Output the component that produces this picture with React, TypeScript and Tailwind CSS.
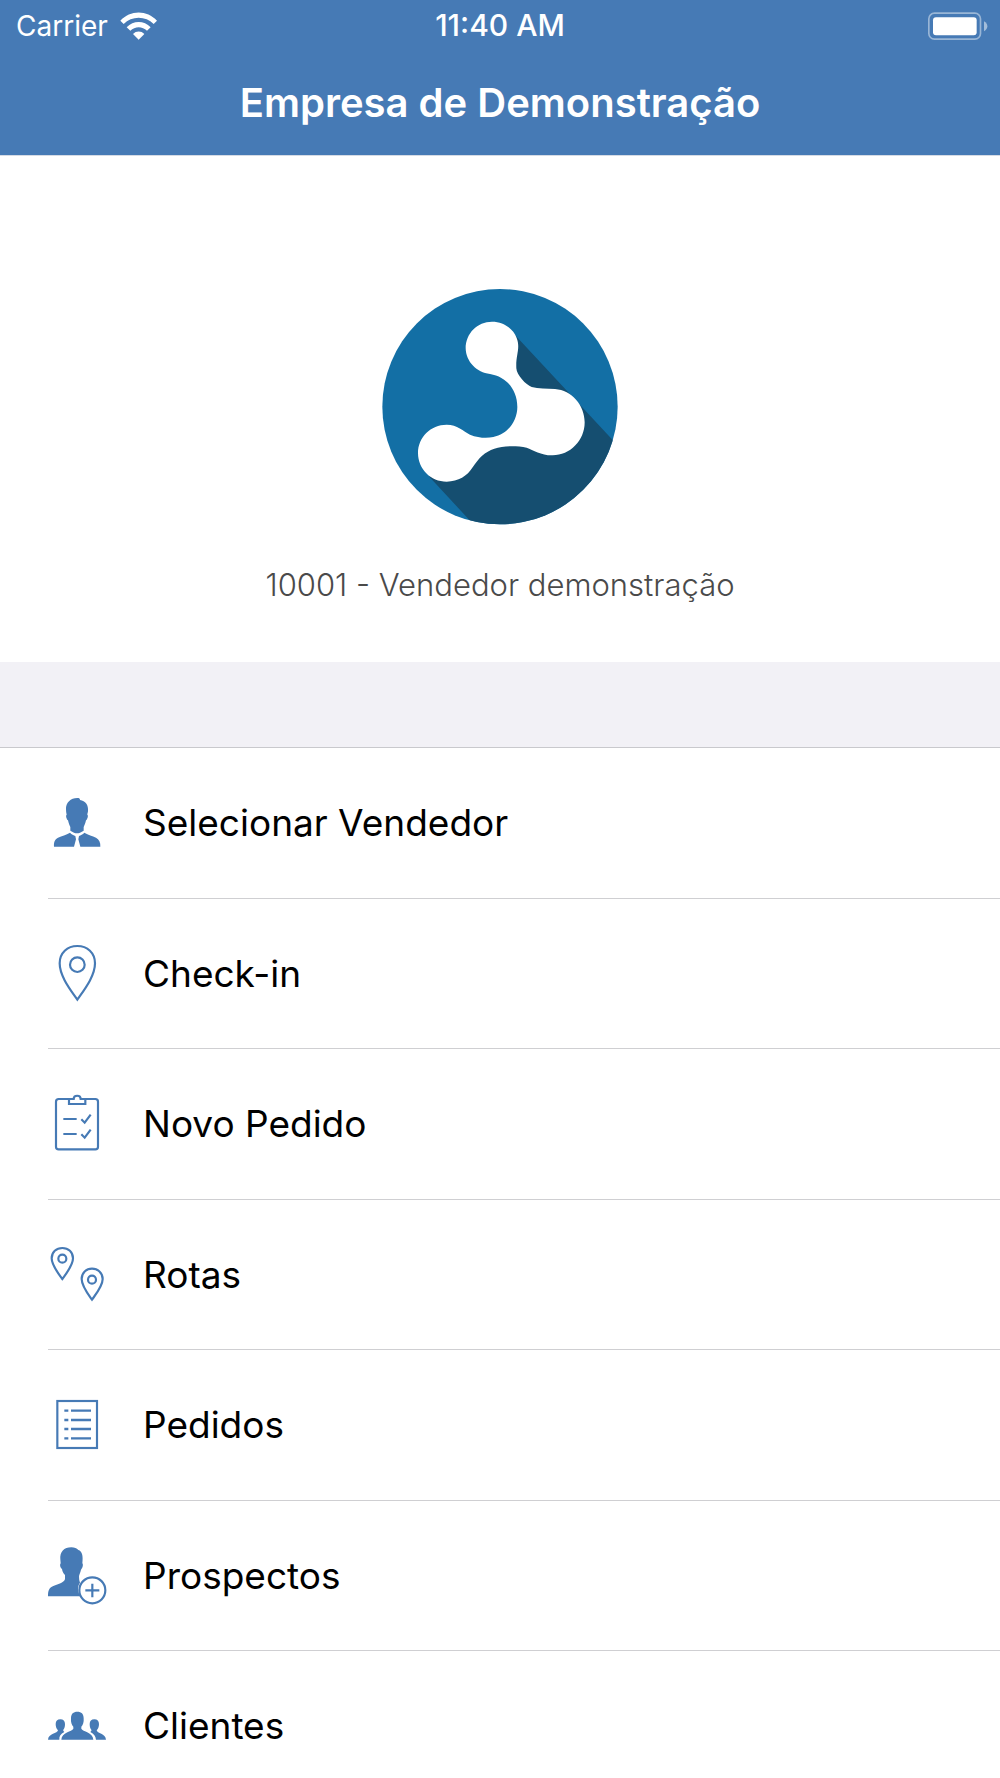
import type { ReactNode } from "react";

function Icon({ viewBox, children }: { viewBox: string; children: ReactNode }) {
  return (
    <svg
      viewBox={viewBox}
      className="size-15 shrink-0 overflow-visible text-[#467ab5]"
      fill="none"
      stroke="currentColor"
      strokeWidth="6.5"
      aria-hidden="true"
    >
      {children}
    </svg>
  );
}

const SellerIcon = () => (
  <Icon viewBox="24 39 180 180">
    <g fill="currentColor" stroke="none">
      <path d="M78 88C77 68 92 54 112 54C118 54 120 56 120 60C136 63 146 74 144 94C143 99 142 102 142 104C146 106 142 118 138 121C136 132 133 136 131 141V152L120 158Q111 162 102 158L91 152V141C88 136 86 130 84 121C80 118 76 106 80 104Q78 97 78 88Z" />
      <path d="M42 200C41 187 44 178 54 173C66 168 78 164 90 158C95 163 101 166 106 168L108 178L102 200Z" />
      <path d="M181 200C182 187 177 178 168 173C157 168 145 164 133 158C128 163 122 166 117 168L115 178L121 200Z" />
    </g>
  </Icon>
);

const PinIcon = () => (
  <Icon viewBox="24 39 180 180">
    <path d="M112 209C92 180 59 139 59 100C59 69 82 48 112 48S165 69 165 100C165 139 132 180 112 209Z" />
    <circle cx="112" cy="104" r="22" />
  </Icon>
);

const ClipboardIcon = () => (
  <Icon viewBox="24 42 180 180">
    <path d="M86 57H56Q48 57 48 65V200Q48 208 56 208H166Q174 208 174 200V65Q174 57 166 57H136" />
    <path d="M87 57V72H136V57H122C122 44 101 44 101 57Z" />
    <path d="M70 117H110M70 162H110M124 118L134 128L152 104M124 163L134 173L152 149" />
  </Icon>
);

const RouteIcon = () => (
  <Icon viewBox="24 43 180 180">
    <path d="M67 148C54 130 35 107 35 86C35 67 49 55 67 55S99 67 99 86C99 107 80 130 67 148Z" />
    <circle cx="67" cy="87" r="12" />
    <path d="M156 210C143 192 125 169 125 148C125 129 139 117 156 117S188 129 188 148C188 169 169 192 156 210Z" />
    <circle cx="156" cy="150" r="12" />
  </Icon>
);

const ListIcon = () => (
  <Icon viewBox="24 45 180 180">
    <rect x="52" y="63" width="119" height="141" />
    <path
      strokeWidth="7"
      d="M73 92H85M93 92H153M73 120H85M93 120H153M73 147H85M93 147H153M73 175H85M93 175H153"
    />
  </Icon>
);

const ProspectIcon = () => (
  <Icon viewBox="24 47 180 180">
    <path
      fill="currentColor"
      stroke="none"
      d="M61 87C59 65 72 51 94 51C104 51 110 54 115 59C126 62 130 76 127 99C131 103 127 115 123 118C121 129 117 132 117 139Q117 151 120 157C110 171 114 187 122 198H24C24 181 27 172 40 167C55 161 75 155 75 145V134C70 129 67 123 66 116C62 114 58 104 62 99Z"
    />
    <circle cx="157" cy="180" r="39" />
    <path d="M157 160V201M136 180H178" />
  </Icon>
);

const ClientsIcon = () => (
  <Icon viewBox="24 19 180 180">
    <g fill="currentColor" stroke="none">
      <path d="M93 86C93 72 100 66 112 66S131 72 131 86C132 98 129 106 124 111V117C128 126 159 127 160 150H64C65 127 96 126 100 117V111C95 106 92 98 93 86Z" />
      <path d="M47 103C47 94 52 89 61 89S75 94 75 103C75 112 73 117 70 120Q68 123 73 127C62 132 57 140 58 150H24C25 131 53 132 54 122C49 117 47 110 47 103Z" />
      <path d="M177 103C177 94 172 89 163 89S149 94 149 103C149 112 151 117 154 120Q156 123 151 127C162 132 167 140 168 150H198C197 131 171 132 170 122C175 117 177 110 177 103Z" />
    </g>
  </Icon>
);

const items = [
  { label: "Selecionar Vendedor", icon: SellerIcon },
  { label: "Check-in", icon: PinIcon },
  { label: "Novo Pedido", icon: ClipboardIcon },
  { label: "Rotas", icon: RouteIcon },
  { label: "Pedidos", icon: ListIcon },
  { label: "Prospectos", icon: ProspectIcon },
  { label: "Clientes", icon: ClientsIcon },
];

function WifiIcon() {
  return (
    <svg viewBox="360 29 111 84" className="h-7 w-[37px]" fill="#fff" role="img" aria-label="Wi-Fi">
      <path d="M361 55C391 22 441 22 471 55L461 65C437 40 395 40 371 65Z" />
      <path d="M380 75C400 54 432 54 452 75L441 85C427 71 405 71 391 85Z" />
      <path d="M399 95C408 85 424 85 433 95L416 112Z" />
    </svg>
  );
}

function BatteryIcon() {
  return (
    <svg viewBox="0 0 180 84" className="h-7 w-15" role="img" aria-label="Bateria">
      <rect x="2.5" y="3.5" width="155" height="78" rx="17" fill="none" stroke="#fff" strokeOpacity=".45" strokeWidth="5" />
      <rect x="15" y="16" width="131" height="54" rx="9" fill="#fff" />
      <path d="M168 28Q178 34 178 43T168 58Z" fill="#fff" fillOpacity=".5" />
    </svg>
  );
}

function Logo() {
  return (
    <svg viewBox="30 21 720 720" className="size-60" role="img" aria-label="Logotipo da empresa">
      <clipPath id="disc">
        <circle cx="390" cy="380" r="353" />
      </clipPath>
      <circle cx="390" cy="380" r="353" fill="#136fa5" />
      <path clipPath="url(#disc)" fill="#154e70" d="M430 160L728 480L760 760H335L178 590L230 520H300L470 420L425 250Z" />
      <path
        fill="#fff"
        d="M287 205C287 160 322 125 366 125C402 125 430 147 440 174C452 205 437 225 439 265C440 285 468 315 485 321C505 327 530 326 555 327C605 331 644 375 644 427C644 482 600 526 548 526C515 527 490 510 470 503C440 497 400 497 373 506C345 515 325 535 308 562C292 588 265 605 230 605C182 605 144 567 144 519C144 472 182 434 230 434C262 434 280 454 300 464C325 474 350 475 370 471C415 463 442 420 442 381C442 330 410 290 360 282C320 278 288 245 287 205Z"
      />
    </svg>
  );
}

export default function App() {
  return (
    <div className="h-screen overflow-y-auto bg-white font-['Inter',sans-serif] text-black [scrollbar-width:none]">
      <header className="border-b border-[#d5dbe5] bg-[#467ab5] text-white">
        <div className="grid h-[51px] grid-cols-3 items-center px-3">
          <div className="flex items-center gap-3 pl-1 text-[28px]">
            <span>Carrier</span>
            <WifiIcon />
          </div>
          <time className="text-center text-[30px] font-medium">11:40 AM</time>
          <div className="flex justify-end">
            <BatteryIcon />
          </div>
        </div>
        <h1 className="pt-[22px] pb-[22px] text-center text-[40px] leading-[60px] font-semibold">Empresa de Demonstração</h1>
      </header>

      <main>
        <section className="flex flex-col items-center pt-[131px] pb-[54px]">
          <Logo />
          <p className="pt-[35px] text-[31px] leading-[46px] font-light text-[#4a4a4a]">10001 - Vendedor demonstração</p>
        </section>

        <div className="h-[85px] bg-[#f2f1f6]" />

        <nav aria-label="Menu principal" className="border-t border-[#c9c9cd]">
          <ul className="grid min-h-[1054px] auto-rows-fr">
            {items.map(({ label, icon: ItemIcon }) => (
              <li key={label} className="ml-12 flex border-b border-[#cfcfd2]">
                <button type="button" className="flex grow items-center gap-[35px] text-left text-[37px]">
                  <ItemIcon />
                  <span>{label}</span>
                </button>
              </li>
            ))}
          </ul>
        </nav>
      </main>
    </div>
  );
}
